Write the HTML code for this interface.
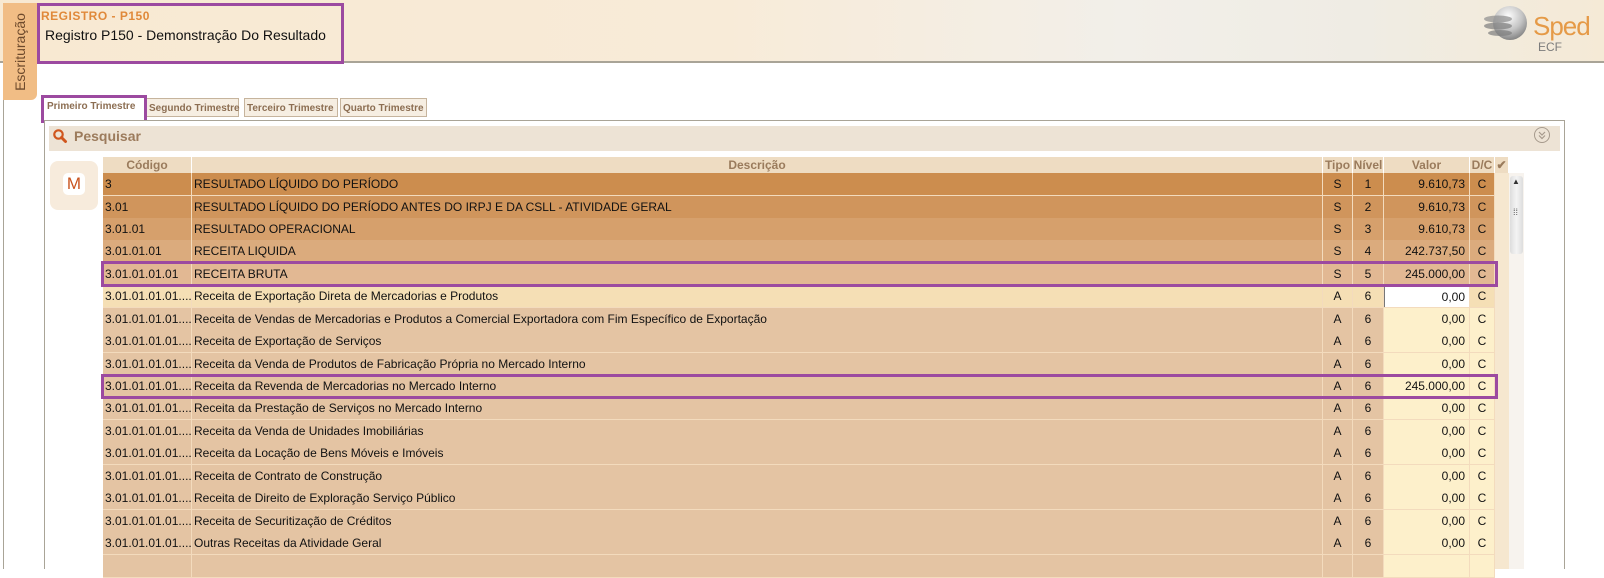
<!DOCTYPE html>
<html><head><meta charset="utf-8"><style>
*{margin:0;padding:0;box-sizing:border-box}
body{width:1604px;height:569px;background:#fff;font-family:"Liberation Sans",Arial,sans-serif;position:relative;overflow:hidden}
.abs{position:absolute}
.banner{left:0;top:0;width:1604px;height:63px;background:linear-gradient(90deg,#f8e9d2 0%,#f8ebd8 45%,#f2efe9 70%,#efece4 85%,#f5ead6 100%);border-bottom:2px solid #a9a497}
.lefttab{left:3px;top:3px;width:34px;height:97px;background:#f1bd85;border-radius:0 0 6px 0}
.lefttab span{position:absolute;left:50%;top:50%;transform:translate(-50%,-50%) rotate(-90deg);font-size:14px;color:#6e4a2c;white-space:nowrap}
.vline{left:3px;top:100px;width:1px;height:469px;background:#a9a497}
.tab{top:98px;height:19px;border:1px solid #c6b49d;background:#f6eee2;font-size:10px;font-weight:bold;color:#8c6e52;padding:4px 2px 0;white-space:nowrap}
.row{position:absolute;left:103px;width:1392px;height:23px;border-bottom:1px solid #f3dbbd;font-size:12px;color:#111}
.row div{position:absolute;top:0;height:22px;line-height:23px;border-right:1px solid #f3dbbd;padding:0 2px;white-space:nowrap;overflow:hidden}
.c1{left:0;width:89px}.c2{left:89px;width:1131px}.c3{left:1220px;width:30px;text-align:center}.c4{left:1250px;width:31px;text-align:center}.c5{left:1281px;width:86px;text-align:right;padding-right:4px!important}.c6{left:1367px;width:25px;text-align:center}
.hdr{position:absolute;top:157px;height:16px;background:#eedcc2;font-size:12px;font-weight:bold;color:#9a7b5c;text-align:center;line-height:16px;border-right:1px solid #fff}
.box{position:absolute;border:3px solid #9c4aa0}
</style></head><body>
<div class="abs banner"></div>
<div class="abs" style="left:41px;top:9px;font-size:12px;font-weight:bold;color:#e0893a;letter-spacing:.5px">REGISTRO - P150</div>
<div class="abs" style="left:45px;top:27px;font-size:14px;color:#111">Registro P150 - Demonstração Do Resultado</div>
<div class="abs" style="left:1480px;top:4px;width:52px;height:40px">
<svg width="52" height="40" viewBox="0 0 52 40"><defs><radialGradient id="g" cx=".45" cy=".3" r=".75"><stop offset="0" stop-color="#fdfdfd"/><stop offset=".55" stop-color="#c4c4c4"/><stop offset="1" stop-color="#7a7a7a"/></radialGradient></defs><ellipse cx="30" cy="19" rx="17" ry="17" fill="url(#g)"/><ellipse cx="18" cy="15" rx="14" ry="3.5" fill="#8d8d8d" opacity=".7"/><ellipse cx="18" cy="22" rx="14" ry="3.5" fill="#7d7d7d" opacity=".7"/><ellipse cx="20" cy="29" rx="12" ry="3" fill="#7d7d7d" opacity=".7"/></svg></div>
<div class="abs" style="left:1533px;top:11px;font-size:26px;color:#e59a47;letter-spacing:-1px">Sped</div>
<div class="abs" style="left:1538px;top:40px;font-size:12px;color:#7c7c7c">ECF</div>
<div class="abs lefttab"><span>Escrituração</span></div>
<div class="abs vline"></div>
<div class="box" style="left:37px;top:3px;width:307px;height:61px"></div>

<div class="abs tab" style="left:45px;width:97px;background:#fff;border:none;color:#8c6e52;top:97px">Primeiro Trimestre</div>
<div class="abs tab" style="left:146px;width:93px">Segundo Trimestre</div>
<div class="abs tab" style="left:244px;width:94px">Terceiro Trimestre</div>
<div class="abs tab" style="left:340px;width:87px">Quarto Trimestre</div>
<div class="box" style="left:41px;top:95px;width:106px;height:28px"></div>

<div class="abs" style="left:44px;top:120px;width:1521px;height:449px;border:1px solid #a9a497;border-bottom:none;background:#fff"></div>
<div class="abs" style="left:49px;top:126px;width:1511px;height:25px;background:#ede3d5"></div>
<svg class="abs" style="left:52px;top:128px" width="16" height="16" viewBox="0 0 16 16"><circle cx="6.5" cy="6.5" r="4.2" fill="none" stroke="#d0561e" stroke-width="2.2"/><path d="M9.5 9.5L13.5 13.5" stroke="#d0561e" stroke-width="3" stroke-linecap="round"/></svg>
<div class="abs" style="left:74px;top:128px;font-size:14px;font-weight:bold;color:#9c7b5c">Pesquisar</div>
<svg class="abs" style="left:1533px;top:126px" width="18" height="18" viewBox="0 0 18 18"><circle cx="9" cy="9" r="7.5" fill="none" stroke="#a69a8c"/><path d="M6 6l3 3 3-3M6 9.5l3 3 3-3" fill="none" stroke="#a69a8c" stroke-width="1.2"/></svg>

<div class="abs" style="left:50px;top:161px;width:48px;height:49px;background:#f7ebdc;border-radius:8px"></div>
<div class="abs" style="left:63px;top:173px;width:22px;height:22px;background:#fff;border-radius:5px;font-size:17px;color:#c9531e;text-align:center;line-height:22px">M</div>

<div class="hdr" style="left:103px;width:89px">Código</div>
<div class="hdr" style="left:192px;width:1131px">Descrição</div>
<div class="hdr" style="left:1323px;width:30px">Tipo</div>
<div class="hdr" style="left:1353px;width:31px">Nível</div>
<div class="hdr" style="left:1384px;width:86px">Valor</div>
<div class="hdr" style="left:1470px;width:25px">D/C</div>
<div class="hdr" style="left:1495px;width:14px;color:#9a7b5c">✔</div>
<div class="abs" style="left:1495px;top:173px;width:14px;height:396px;background:#f6e7cf"></div>
<div class="abs" style="left:1509px;top:173px;width:15px;height:396px;background:#f7f3ee"></div>
<div class="abs" style="left:1510px;top:176px;width:13px;height:78px;background:linear-gradient(90deg,#ddd,#f4f4f4,#ddd);border-radius:3px"></div>
<div class="abs" style="left:1512px;top:177px;font-size:8px;color:#333">▲</div>
<div class="abs" style="left:1513px;top:210px;font-size:9px;color:#555;line-height:4px">⁞⁞</div>

<div class="row" style="top:173px;background:#cc8d4e"><div class="c1">3</div><div class="c2">RESULTADO LÍQUIDO DO PERÍODO</div><div class="c3">S</div><div class="c4">1</div><div class="c5">9.610,73</div><div class="c6">C</div></div>
<div class="row" style="top:196px;background:#d0955c"><div class="c1">3.01</div><div class="c2">RESULTADO LÍQUIDO DO PERÍODO ANTES DO IRPJ E DA CSLL - ATIVIDADE GERAL</div><div class="c3">S</div><div class="c4">2</div><div class="c5">9.610,73</div><div class="c6">C</div></div>
<div class="row" style="top:218px;background:#d6a06c"><div class="c1">3.01.01</div><div class="c2">RESULTADO OPERACIONAL</div><div class="c3">S</div><div class="c4">3</div><div class="c5">9.610,73</div><div class="c6">C</div></div>
<div class="row" style="top:240px;background:#dbab7d"><div class="c1">3.01.01.01</div><div class="c2">RECEITA LIQUIDA</div><div class="c3">S</div><div class="c4">4</div><div class="c5">242.737,50</div><div class="c6">C</div></div>
<div class="row" style="top:263px;background:#e2b893"><div class="c1">3.01.01.01.01</div><div class="c2">RECEITA BRUTA</div><div class="c3">S</div><div class="c4">5</div><div class="c5">245.000,00</div><div class="c6">C</div></div>
<div class="row" style="top:285px;background:#f5dfb5"><div class="c1">3.01.01.01.01....</div><div class="c2">Receita de Exportação Direta de Mercadorias e Produtos</div><div class="c3">A</div><div class="c4">6</div><div class="c5" style="background:#fff;border-left:1px solid #777;border-top:1px solid #777">0,00</div><div class="c6">C</div></div>
<div class="row" style="top:308px;background:#e4c4a3"><div class="c1">3.01.01.01.01....</div><div class="c2">Receita de Vendas de Mercadorias e Produtos a Comercial Exportadora com Fim Específico de Exportação</div><div class="c3">A</div><div class="c4">6</div><div class="c5" style="background:#fdf0cb">0,00</div><div class="c6" style="background:#fdf0cb">C</div></div>
<div class="row" style="top:330px;background:#e4c4a3"><div class="c1">3.01.01.01.01....</div><div class="c2">Receita de Exportação de Serviços</div><div class="c3">A</div><div class="c4">6</div><div class="c5" style="background:#fdf0cb">0,00</div><div class="c6" style="background:#fdf0cb">C</div></div>
<div class="row" style="top:353px;background:#e4c4a3"><div class="c1">3.01.01.01.01....</div><div class="c2">Receita da Venda de Produtos de Fabricação Própria no Mercado Interno</div><div class="c3">A</div><div class="c4">6</div><div class="c5" style="background:#fdf0cb">0,00</div><div class="c6" style="background:#fdf0cb">C</div></div>
<div class="row" style="top:375px;background:#e4c4a3"><div class="c1">3.01.01.01.01....</div><div class="c2">Receita da Revenda de Mercadorias no Mercado Interno</div><div class="c3">A</div><div class="c4">6</div><div class="c5" style="background:#fdf0cb">245.000,00</div><div class="c6" style="background:#fdf0cb">C</div></div>
<div class="row" style="top:397px;background:#e4c4a3"><div class="c1">3.01.01.01.01....</div><div class="c2">Receita da Prestação de Serviços no Mercado Interno</div><div class="c3">A</div><div class="c4">6</div><div class="c5" style="background:#fdf0cb">0,00</div><div class="c6" style="background:#fdf0cb">C</div></div>
<div class="row" style="top:420px;background:#e4c4a3"><div class="c1">3.01.01.01.01....</div><div class="c2">Receita da Venda de Unidades Imobiliárias</div><div class="c3">A</div><div class="c4">6</div><div class="c5" style="background:#fdf0cb">0,00</div><div class="c6" style="background:#fdf0cb">C</div></div>
<div class="row" style="top:442px;background:#e4c4a3"><div class="c1">3.01.01.01.01....</div><div class="c2">Receita da Locação de Bens Móveis e Imóveis</div><div class="c3">A</div><div class="c4">6</div><div class="c5" style="background:#fdf0cb">0,00</div><div class="c6" style="background:#fdf0cb">C</div></div>
<div class="row" style="top:465px;background:#e4c4a3"><div class="c1">3.01.01.01.01....</div><div class="c2">Receita de Contrato de Construção</div><div class="c3">A</div><div class="c4">6</div><div class="c5" style="background:#fdf0cb">0,00</div><div class="c6" style="background:#fdf0cb">C</div></div>
<div class="row" style="top:487px;background:#e4c4a3"><div class="c1">3.01.01.01.01....</div><div class="c2">Receita de Direito de Exploração Serviço Público</div><div class="c3">A</div><div class="c4">6</div><div class="c5" style="background:#fdf0cb">0,00</div><div class="c6" style="background:#fdf0cb">C</div></div>
<div class="row" style="top:510px;background:#e4c4a3"><div class="c1">3.01.01.01.01....</div><div class="c2">Receita de Securitização de Créditos</div><div class="c3">A</div><div class="c4">6</div><div class="c5" style="background:#fdf0cb">0,00</div><div class="c6" style="background:#fdf0cb">C</div></div>
<div class="row" style="top:532px;background:#e4c4a3"><div class="c1">3.01.01.01.01....</div><div class="c2">Outras Receitas da Atividade Geral</div><div class="c3">A</div><div class="c4">6</div><div class="c5" style="background:#fdf0cb">0,00</div><div class="c6" style="background:#fdf0cb">C</div></div>
<div class="row" style="top:555px;background:#e4c4a3"><div class="c1"></div><div class="c2"></div><div class="c3"></div><div class="c4"></div><div class="c5" style="background:#fdf0cb"></div><div class="c6" style="background:#fdf0cb"></div></div>

<div class="box" style="left:101px;top:261px;height:26px;width:1397px"></div>
<div class="box" style="left:101px;top:374px;width:1397px;height:25px"></div>
</body></html>
